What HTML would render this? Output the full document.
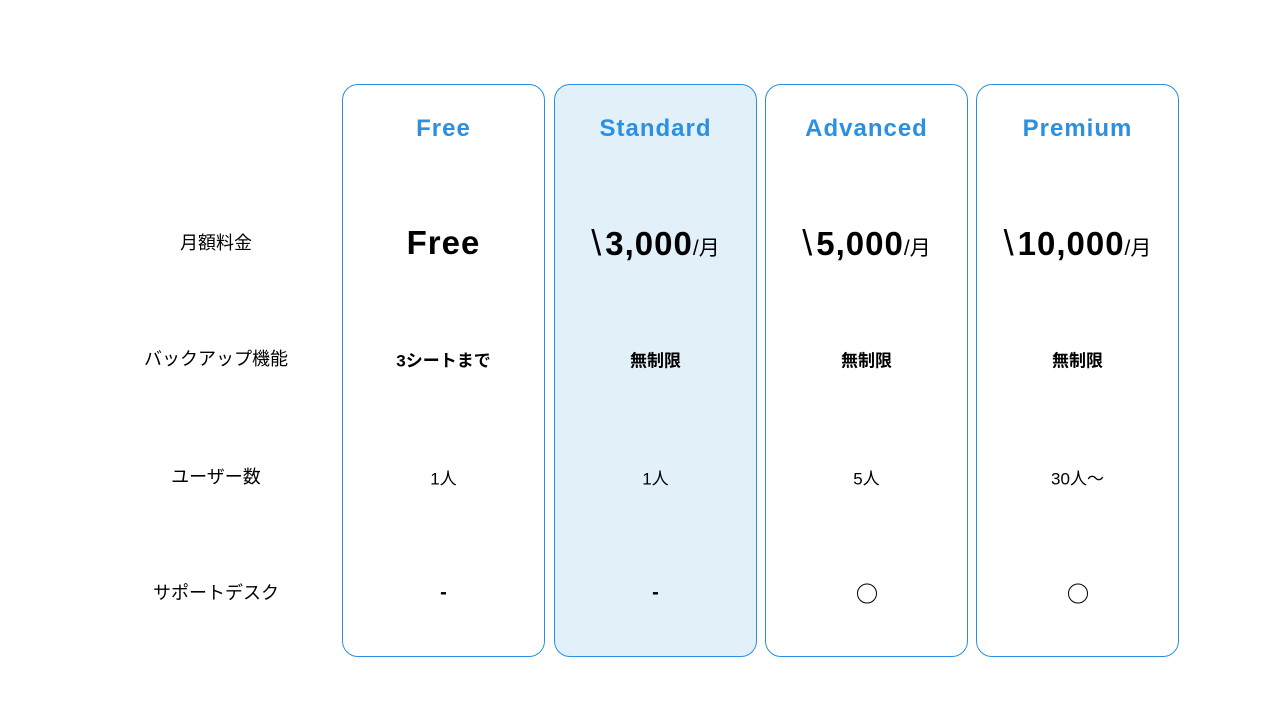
<!DOCTYPE html>
<html><head><meta charset="utf-8"><style>
body{margin:0;width:1280px;height:720px;background:#fff;font-family:"Liberation Sans","Noto Sans CJK JP",sans-serif;position:relative;overflow:hidden}
.card{position:absolute;top:84px;width:203px;height:573px;border:1px solid #2a8fe3;border-radius:16px;box-sizing:border-box}
.t{position:absolute;left:0;width:100%;text-align:center;transform:translateY(-50%)}
.h{top:44px;color:#2b90e2;font-weight:bold;font-size:24px;letter-spacing:1px}
.p{top:158px;font-weight:bold;font-size:33px;color:#000;letter-spacing:1px}
.p small{font-size:21px;font-weight:normal;letter-spacing:0}
.p .bs{font-weight:normal;font-size:36px;margin-right:3px}
.b{top:274px;font-weight:bold;font-size:17px}
.n{top:392px;font-size:17px}
.s{top:508px;font-size:20px;font-weight:bold}
.l{position:absolute;width:200px;left:116px;text-align:center;font-size:18px;transform:translateY(-50%)}
.c{display:inline-block;width:20px;height:20px;border:1.5px solid #000;border-radius:50%;vertical-align:middle;box-sizing:border-box}
</style></head><body>
<div class="l" style="top:242px">月額料金</div>
<div class="l" style="top:358px">バックアップ機能</div>
<div class="l" style="top:476px">ユーザー数</div>
<div class="l" style="top:592px">サポートデスク</div>
<div class="card" style="left:342px"><div class="t h">Free</div><div class="t p">Free</div><div class="t b">3シートまで</div><div class="t n">1人</div><div class="t s">-</div></div>
<div class="card" style="left:554px;background:#e2f0fa"><div class="t h">Standard</div><div class="t p"><span class="bs">\</span>3,000<small>/月</small></div><div class="t b">無制限</div><div class="t n">1人</div><div class="t s">-</div></div>
<div class="card" style="left:765px"><div class="t h">Advanced</div><div class="t p"><span class="bs">\</span>5,000<small>/月</small></div><div class="t b">無制限</div><div class="t n">5人</div><div class="t s"><span class="c"></span></div></div>
<div class="card" style="left:976px"><div class="t h">Premium</div><div class="t p"><span class="bs">\</span>10,000<small>/月</small></div><div class="t b">無制限</div><div class="t n">30人〜</div><div class="t s"><span class="c"></span></div></div>
</body></html>
